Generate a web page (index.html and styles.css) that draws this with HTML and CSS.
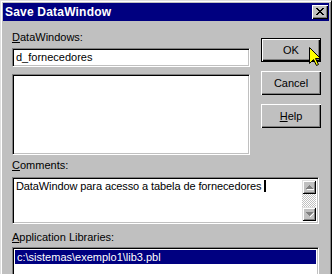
FILE: index.html
```html
<!DOCTYPE html>
<html>
<head>
<meta charset="utf-8">
<title>Save DataWindow</title>
<link rel="stylesheet" href="styles.css">
</head>
<body>
<div class="win">
  <div class="title">
    <span class="title-text">Save DataWindow</span>
    <span class="close">
      <svg width="8" height="7" viewBox="0 0 8 7" shape-rendering="crispEdges">
        <path d="M0 0h2v1H0zM6 0h2v1H6zM1 1h2v1H1zM5 1h2v1H5zM2 2h4v1H2zM3 3h2v1H3zM2 4h4v1H2zM1 5h2v1H1zM5 5h2v1H5zM0 6h2v1H0zM6 6h2v1H6z" fill="#000"/>
      </svg>
    </span>
  </div>
  <div class="content">
    <div class="top">
      <div class="left">
        <div class="label"><u>D</u>ataWindows:</div>
        <div class="field input">d_fornecedores</div>
        <div class="field list"></div>
      </div>
      <div class="buttons">
        <div class="btn default">OK</div>
        <div class="btn">Cancel</div>
        <div class="btn"><u>H</u>elp</div>
      </div>
    </div>
    <div class="label label-comments"><u>C</u>omments:</div>
    <div class="field comments">
      <div class="comment-text">DataWindow para acesso a tabela de fornecedores<span class="caret"></span></div>
      <div class="scrollbar">
        <div class="sb-btn">
          <svg width="7" height="5" viewBox="0 0 7 5" shape-rendering="crispEdges">
            <path d="M4 1h1v1H4zM5 2h1v1H5zM6 3h1v1H6zM1 4h7v1H1z" fill="#fff"/>
            <path d="M3 0h1v1H3zM2 1h3v1H2zM1 2h5v1H1zM0 3h7v1H0z" fill="#808080"/>
          </svg>
        </div>
        <div class="sb-track"></div>
        <div class="sb-btn">
          <svg width="7" height="5" viewBox="0 0 7 5" shape-rendering="crispEdges">
            <path d="M7 1h1v1H7zM6 2h1v1H6zM5 3h1v1H5zM4 4h1v1H4z" fill="#fff"/>
            <path d="M0 0h7v1H0zM1 1h5v1H1zM2 2h3v1H2zM3 3h1v1H3z" fill="#808080"/>
          </svg>
        </div>
      </div>
    </div>
    <div class="label label-libs"><u>A</u>pplication Libraries:</div>
    <div class="field libs">
      <div class="lib-row selected">c:\sistemas\exemplo1\lib3.pbl</div>
    </div>
  </div>
</div>
<svg class="cursor" width="13" height="20" viewBox="0 0 13 20">
  <path d="M0.5 0.5V16.5L4.5 12.5L7.5 18.5L9.5 17.5L6.5 11.5H11.5Z" fill="#ffff00" stroke="#000" stroke-width="1"/>
</svg>
</body>
</html>
```

FILE: styles.css
```css
* {
  box-sizing: border-box;
}

html,
body {
  margin: 0;
  padding: 0;
}

body {
  position: relative;
  width: 332px;
  height: 274px;
  overflow: hidden;
  background: #c0c0c0;
  font-family: "Liberation Sans", Arial, sans-serif;
  font-size: 11px;
  color: #000;
}

.win {
  width: 332px;
  height: 274px;
  overflow: hidden;
  background: #c0c0c0;
  border-top: 1px solid #dfdfdf;
  border-left: 1px solid #dfdfdf;
  border-right: 1px solid #000;
  box-shadow: inset 1px 1px #fff, inset -1px 0 #808080;
  padding: 2px 2px 0 2px;
}

.title {
  height: 18px;
  background: #000080;
  color: #fff;
  display: flex;
  align-items: center;
  justify-content: space-between;
  padding: 0 1px 0 2px;
}

.title-text {
  font-weight: bold;
  font-size: 12px;
  letter-spacing: 0.2px;
}

.close {
  width: 16px;
  height: 14px;
  background: #c0c0c0;
  box-shadow: inset 1px 1px #fff, inset -1px -1px #000, inset -2px -2px #808080;
  display: flex;
  align-items: center;
  justify-content: center;
  padding: 0 1px 1px 0;
}

.close svg {
  display: block;
}

.content {
  padding: 10px 0 0 9px;
}

.top {
  display: grid;
  grid-template-columns: 238px 60px;
  column-gap: 11px;
}

.label {
  height: 13px;
  line-height: 13px;
  white-space: nowrap;
}

.field {
  background: #fff;
  border: 1px solid;
  border-color: #808080 #fff #fff #808080;
  box-shadow: inset 1px 1px #000, inset -1px -1px #c0c0c0;
}

.input {
  margin-top: 4px;
  height: 19px;
  line-height: 15px;
  padding: 1px 0 0 3px;
  white-space: nowrap;
}

.list {
  margin-top: 7px;
  height: 81px;
}

.buttons {
  display: flex;
  flex-direction: column;
  gap: 9px;
  padding-top: 7px;
}

.btn {
  height: 24px;
  background: #c0c0c0;
  box-shadow: inset 1px 1px #fff, inset -1px -1px #000, inset -2px -2px #808080;
  display: flex;
  align-items: center;
  justify-content: center;
  padding-bottom: 1px;
}

.btn.default {
  border: 1px solid #000;
}

.label-comments {
  margin-top: 4px;
}

.comments {
  margin-top: 5px;
  width: 307px;
  height: 47px;
  display: flex;
  padding: 2px;
}

.comment-text {
  flex: 1;
  padding: 0 0 0 1px;
  line-height: 13px;
  white-space: nowrap;
  letter-spacing: -0.1px;
}

.caret {
  display: inline-block;
  width: 2px;
  height: 12px;
  background: #000;
  margin-left: 3px;
  vertical-align: -2px;
}

.scrollbar {
  width: 14px;
  display: flex;
  flex-direction: column;
}

.sb-btn {
  height: 14px;
  background: #c0c0c0;
  box-shadow: inset 1px 1px #dfdfdf, inset -1px -1px #000, inset 2px 2px #fff, inset -2px -2px #808080;
  display: flex;
  align-items: center;
  justify-content: center;
}

.sb-btn svg {
  display: block;
  overflow: visible;
}

.sb-track {
  flex: 1;
  background: repeating-conic-gradient(#fff 0 25%, #c0c0c0 0 50%) 0 0 / 2px 2px;
}

.label-libs {
  margin-top: 7px;
}

.libs {
  margin-top: 3px;
  width: 307px;
  height: 40px;
  padding: 2px;
}

.lib-row {
  height: 14px;
  line-height: 14px;
  padding-left: 2px;
  white-space: nowrap;
}

.lib-row.selected {
  background: #000080;
  color: #fff;
}

.cursor {
  position: absolute;
  left: 309px;
  top: 47px;
}
```
